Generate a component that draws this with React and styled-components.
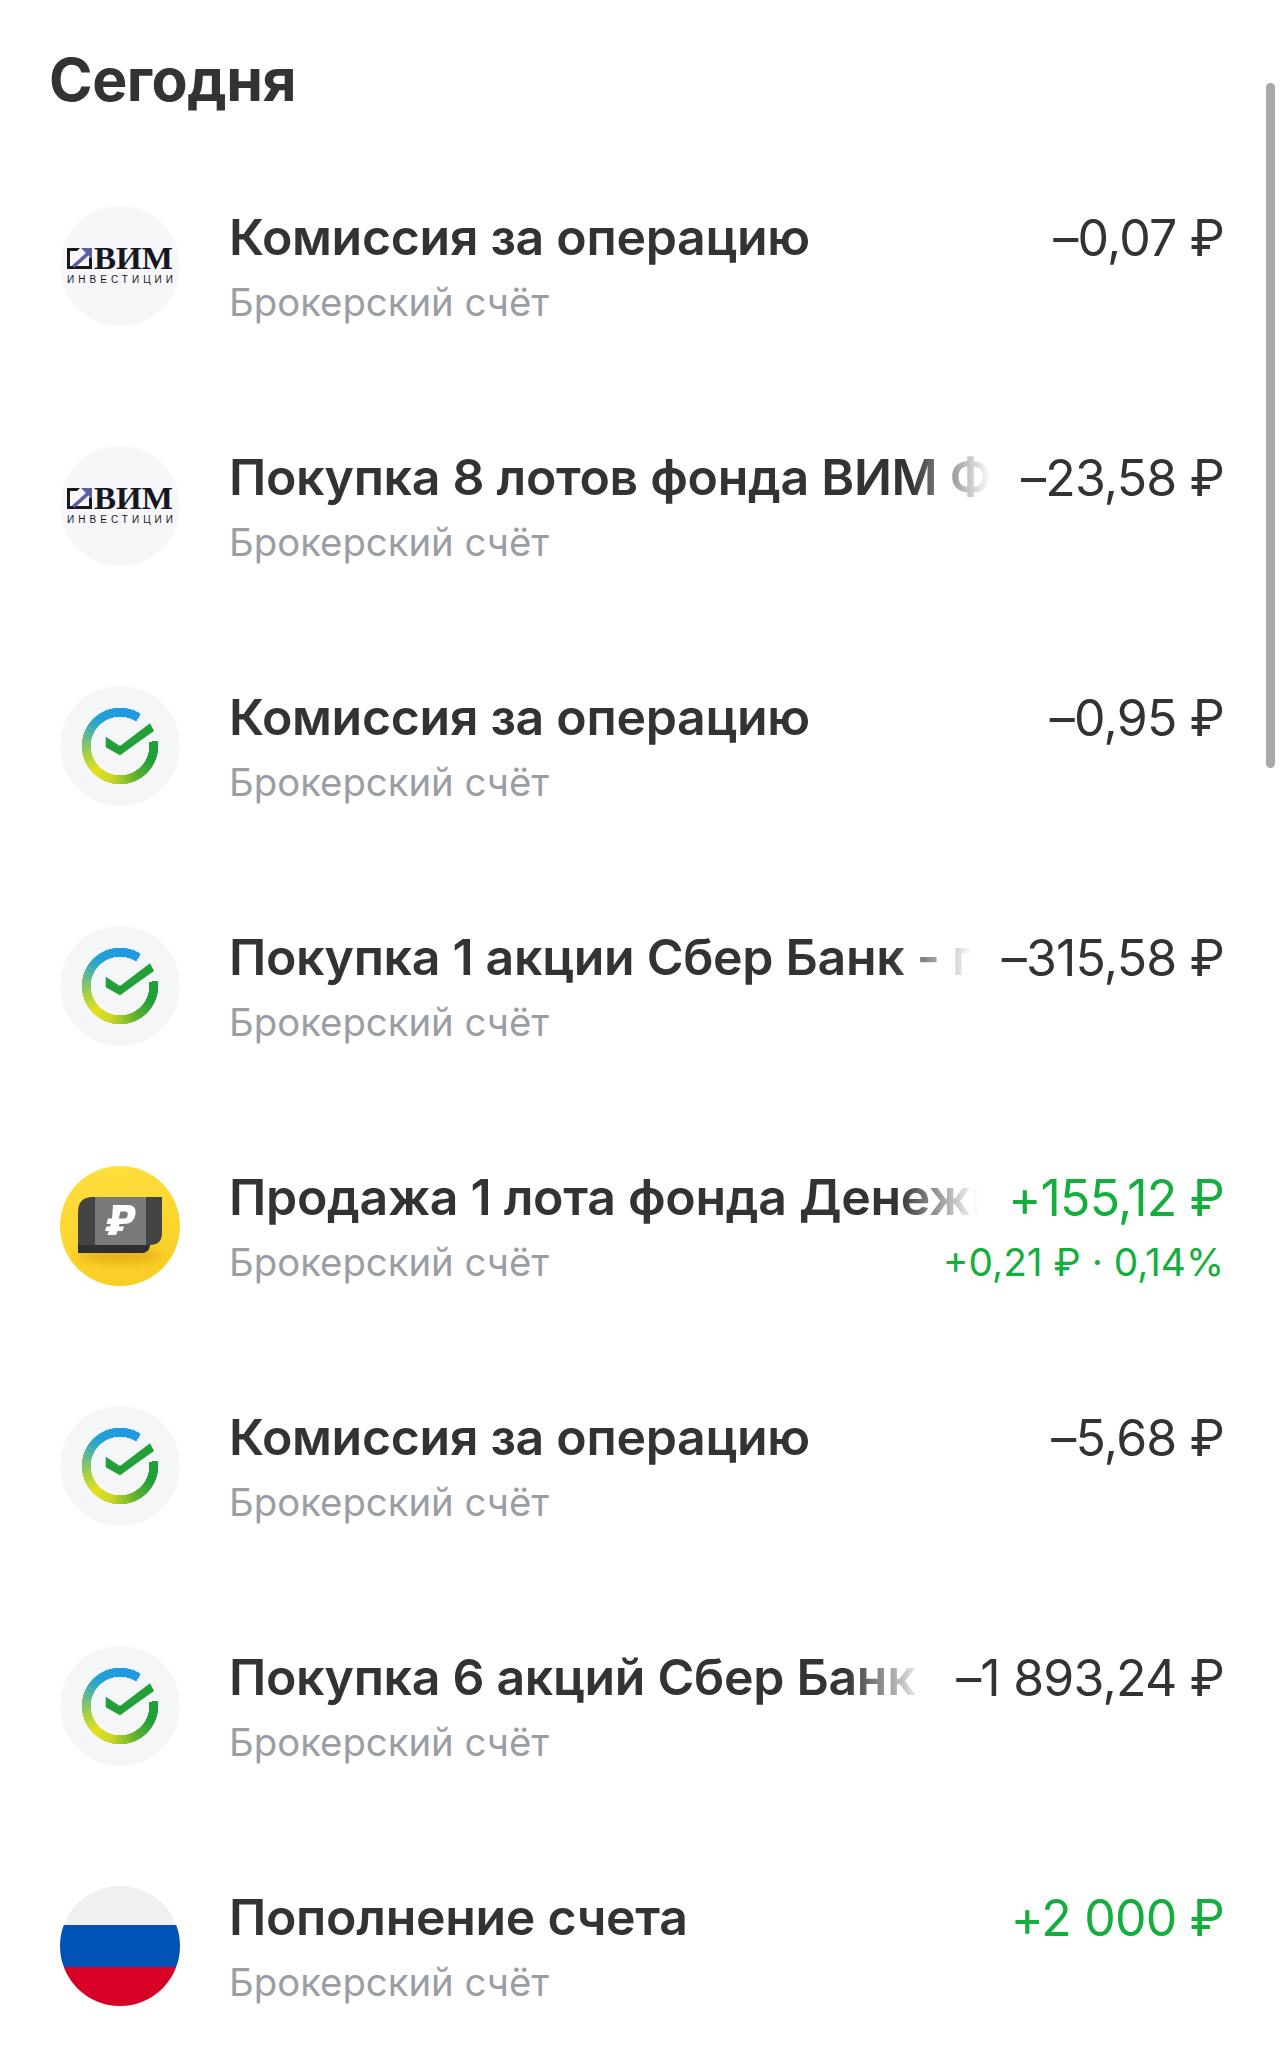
import styled, { createGlobalStyle } from "styled-components"

const GlobalStyle = createGlobalStyle`
    html, body {
        margin: 0;
        padding: 0;
        background: #fff;
    }
    body {
        font-family: Inter, Roboto, sans-serif;
        color: #333333;
    }
`

const Page = styled.div`
    position: relative;
    width: 1284px;
    height: 2063px;
    overflow: hidden;
    background: #fff;
`

const Scrollbar = styled.div`
    position: absolute;
    top: 83px;
    right: 9px;
    width: 9px;
    height: 685px;
    border-radius: 5px;
    background: #a9a9a9;
`

const Heading = styled.h1`
    margin: 0;
    padding: 45px 0 0 49px;
    height: 87px;
    font-size: 59px;
    line-height: 70px;
    font-weight: 700;
    letter-spacing: -0.5px;
    color: #333333;
`

const List = styled.div`
    display: flex;
    flex-direction: column;
    padding: 74px 60px 0 60px;
`

const Row = styled.div`
    display: flex;
    align-items: flex-start;
    height: 240px;
`

const IconSlot = styled.div`
    flex: none;
    width: 120px;
    height: 120px;
    margin-right: 49px;
`

const Body = styled.div`
    flex: 1;
    min-width: 0;
    display: flex;
    flex-direction: column;
    gap: 6px;
`

const Line = styled.div`
    display: flex;
    justify-content: space-between;
    align-items: flex-start;
`

const Title = styled.div`
    flex: 1;
    min-width: 0;
    margin-right: 30px;
    font-size: 50px;
    line-height: 62px;
    font-weight: 600;
    letter-spacing: -0.3px;
    white-space: nowrap;
    overflow: hidden;
    color: #333333;
    mask-image: ${(p) => (p.$fade ? "linear-gradient(to right, #000 calc(100% - 80px), transparent)" : "none")};
`

const Sub = styled.div`
    font-size: 38.3px;
    line-height: 52px;
    color: #9a9ea5;
    white-space: nowrap;
`

const Amount = styled.div`
    flex: none;
    font-size: 50px;
    line-height: 64px;
    font-weight: 400;
    letter-spacing: -0.8px;
    white-space: nowrap;
    color: ${(p) => (p.$plus ? "#14ae3c" : "#333333")};
`

const Delta = styled.div`
    font-size: 38.8px;
    line-height: 52px;
    color: #14ae3c;
    white-space: nowrap;
`

const Round = styled.div`
    position: relative;
    width: 120px;
    height: 120px;
    border-radius: 50%;
    background: ${(p) => p.$bg};
    overflow: hidden;
`

const SberRing = styled.div`
    position: absolute;
    inset: 0;
    background: conic-gradient(
        #1e9be4 0deg,
        #1e9be4 33deg,
        transparent 33deg,
        transparent 82deg,
        #21a038 82deg,
        #21a038 115deg,
        #5bb032 150deg,
        #c8d626 195deg,
        #e3df1c 225deg,
        #a9cf3f 255deg,
        #5bb59a 290deg,
        #25a0d8 320deg,
        #1e9be4 360deg
    );
    mask-image: radial-gradient(circle at center, transparent 29px, #000 29.5px, #000 38px, transparent 38.5px);
`

const OverlaySvg = styled.svg`
    position: absolute;
    inset: 0;
    width: 120px;
    height: 120px;
`

const Flag = styled(Round)`
    background: linear-gradient(
        #f0f0f0 0,
        #f0f0f0 39px,
        #0052b4 39px,
        #0052b4 81px,
        #d80027 81px,
        #d80027 100%
    );
`

const VimLogo = () => (
    <Round $bg="#f7f7fa">
        <OverlaySvg viewBox="0 0 120 120">
            <path d="M7 42h13l-3 3h-7v15h19v-8l3-3v14H7z" fill="#16161f" />
            <path d="M21 42h11v11l-3.500-3.500L14.500 62 12 59.500l14-12.500z" fill="#5c5ca8" />
            <text x="34" y="63" fontFamily="Liberation Serif" fontSize="32" fontWeight="700" fill="#16161f" textLength="79" lengthAdjust="spacingAndGlyphs">ВИМ</text>
            <text x="7" y="77" fontFamily="Liberation Sans" fontSize="10" fill="#16161f" textLength="106">ИНВЕСТИЦИИ</text>
        </OverlaySvg>
    </Round>
)

const SberLogo = () => (
    <Round $bg="#f5f6f7">
        <SberRing />
        <OverlaySvg viewBox="0 0 120 120">
            <path d="M45.7 50.7L60 60 90 37.3 94 45 60 69.3 45.7 61.3z" fill="#21a038" />
        </OverlaySvg>
    </Round>
)

const CoinLogo = () => (
    <Round $bg="linear-gradient(165deg, #ffe040, #f9cc22)">
        <OverlaySvg viewBox="0 0 120 120">
            <defs>
                <filter id="coin-shadow" x="-30%" y="-60%" width="160%" height="220%">
                    <feGaussianBlur stdDeviation="5" />
                </filter>
            </defs>
            <ellipse cx="60" cy="90" rx="42" ry="7" fill="#d99a10" opacity="0.6" filter="url(#coin-shadow)" />
            <path d="M33 31h69v36q0 12-12 12-1 8-9 8H18V46q0-15 15-15z" fill="#444" />
            <path d="M18 79h72q-1 8-9 8H18z" fill="#2f2f2f" />
            <path d="M35 31h51v48H35z" fill="#7a7a7a" />
            <path
                fillRule="evenodd"
                d="M53 39H68Q76.500 39 75.500 48 74.500 58 63 58H59.500L58.800 60.500H64L62.500 65H57.500L56 69H47.500L48.800 65H45L46.500 60.500H50L50.700 58H46.500L48 52.500H52ZM60.500 45.500L58.800 52.500H64Q67.500 52.500 67.800 48.500 68 45.500 65 45.500Z"
                fill="#fff"
            />
        </OverlaySvg>
    </Round>
)

const FlagLogo = () => <Flag />

const rows = [
    { icon: VimLogo, title: "Комиссия за операцию", amount: "–0,07 ₽" },
    { icon: VimLogo, title: "Покупка 8 лотов фонда ВИМ Ф", amount: "–23,58 ₽", fade: true },
    { icon: SberLogo, title: "Комиссия за операцию", amount: "–0,95 ₽" },
    { icon: SberLogo, title: "Покупка 1 акции Сбер Банк - п", amount: "–315,58 ₽", fade: true },
    { icon: CoinLogo, title: "Продажа 1 лота фонда Денежн", amount: "+155,12 ₽", plus: true, delta: "+0,21 ₽ · 0,14%", fade: true },
    { icon: SberLogo, title: "Комиссия за операцию", amount: "–5,68 ₽" },
    { icon: SberLogo, title: "Покупка 6 акций Сбер Банк", amount: "–1 893,24 ₽", fade: true },
    { icon: FlagLogo, title: "Пополнение счета", amount: "+2 000 ₽", plus: true },
]

const App = () => {
    return (
        <>
            <GlobalStyle />
            <Page>
                <Heading>Сегодня</Heading>
                <List>
                    {rows.map((row, i) => (
                        <Row key={i}>
                            <IconSlot>
                                <row.icon />
                            </IconSlot>
                            <Body>
                                <Line>
                                    <Title $fade={row.fade}>{row.title}</Title>
                                    <Amount $plus={row.plus}>{row.amount}</Amount>
                                </Line>
                                <Line>
                                    <Sub>Брокерский счёт</Sub>
                                    {row.delta && <Delta>{row.delta}</Delta>}
                                </Line>
                            </Body>
                        </Row>
                    ))}
                </List>
                <Scrollbar />
            </Page>
        </>
    )
}

export default App
